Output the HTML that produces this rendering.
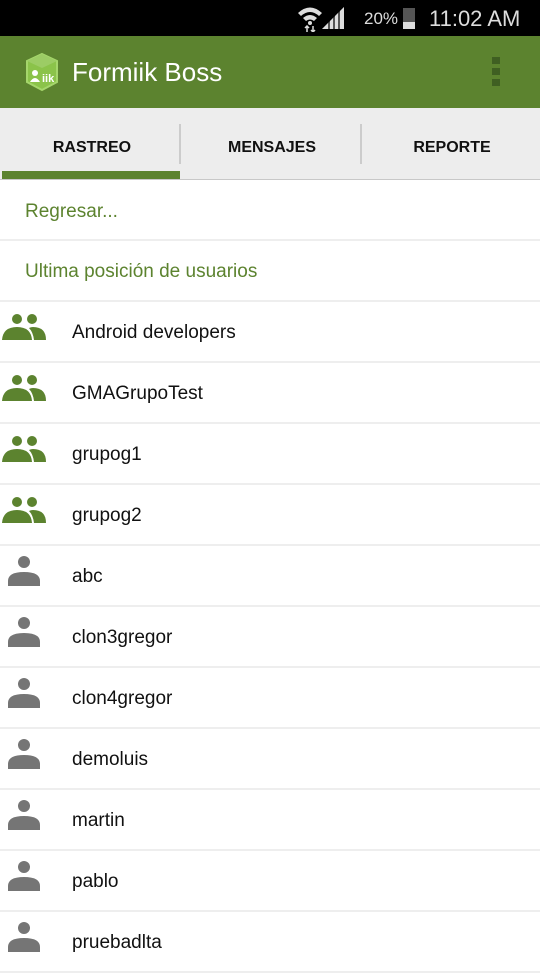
<!DOCTYPE html>
<html><head><meta charset="utf-8"><style>
*{margin:0;padding:0;box-sizing:border-box}
body{width:540px;height:960px;overflow:hidden;background:#fff;font-family:"Liberation Sans",sans-serif;position:relative}
.sb{position:absolute;top:0;left:0;width:540px;height:36px;background:#000;color:#ddd}
.ab{position:absolute;top:36px;left:0;width:540px;height:72px;background:#5c832f}
.tabs{position:absolute;top:108px;left:0;width:540px;height:72px;background:#ededed;border-bottom:1px solid #c8c8c8}
.tab{position:absolute;top:0;height:72px;line-height:80px;text-align:center;font-weight:bold;font-size:16px;color:#111;width:180px}
.sep{position:absolute;top:16px;width:2px;height:40px;background:#ccc}
.row{position:absolute;left:0;width:540px;height:61px;border-bottom:2px solid #eee}
.row span{position:absolute;left:72px;top:20px;font-size:19px;color:#111}
.g span{left:25px;color:#5c832f}
svg{position:absolute}
</style></head><body>
<div class="sb">
<svg style="left:296px;top:4px" width="30" height="28" viewBox="0 0 30 28"><path d="M2 9 Q14 -2 26 9 L23 12 Q14 4 5 12Z M7 14 Q14 8 21 14 L18 17 Q14 14 10 17Z" fill="#ddd"/><circle cx="14" cy="19" r="2" fill="#ddd"/><path d="M11 22v6M9 24l2-2 2 2M17 28v-6M15 26l2 2 2-2" stroke="#ddd" stroke-width="1.5" fill="none"/></svg>
<svg style="left:320px;top:6px" width="26" height="24" viewBox="0 0 26 24"><path d="M2 23 L24 1 V23Z" fill="#555"/><path d="M2 23 L8 17 V23Z M10 23 V15 L13 12 V23Z M15 23 V10 L18 7 V23Z M20 23 V5 L24 1 V23Z" fill="#ddd"/></svg>
<div style="position:absolute;left:364px;top:9px;font-size:17px;color:#ddd">20%</div>
<div style="position:absolute;left:403px;top:6px;width:12px;height:23px;background:#555;border-top:2px solid #000"></div>
<div style="position:absolute;left:403px;top:22px;width:12px;height:7px;background:#ddd"></div>
<div style="position:absolute;left:429px;top:6px;font-size:22px;color:#ddd">11:02 AM</div>
</div>
<div class="ab">
<svg style="left:24px;top:16px" width="36" height="40" viewBox="0 0 36 40"><path d="M18 2 L33 9 V30 L18 38 L3 30 V9Z" fill="#8bc34a" stroke="#a5d66b" stroke-width="2"/><path d="M18 2 L33 9 L18 16 L3 9Z" fill="#9ccc65"/><circle cx="11" cy="21" r="3" fill="#fff"/><path d="M6 30 Q11 22 16 30Z" fill="#fff"/><text x="18" y="30" font-size="11" fill="#fff" font-family="Liberation Sans" font-weight="bold">iik</text></svg>
<div style="position:absolute;left:72px;top:21px;font-size:26px;color:#fff">Formiik Boss</div>
<div style="position:absolute;left:492px;top:21px;width:8px;height:7px;background:#3f5f22"></div>
<div style="position:absolute;left:492px;top:32px;width:8px;height:7px;background:#3f5f22"></div>
<div style="position:absolute;left:492px;top:43px;width:8px;height:7px;background:#3f5f22"></div>
</div>
<div class="tabs">
<div class="tab" style="left:2px">RASTREO</div>
<div class="sep" style="left:179px"></div>
<div class="tab" style="left:182px">MENSAJES</div>
<div class="sep" style="left:360px"></div>
<div class="tab" style="left:362px">REPORTE</div>
<div style="position:absolute;left:2px;top:63px;width:178px;height:8px;background:#5c832f"></div>
</div>
<div class="row g" style="top:180px"><span style="top:21px">Regresar...</span></div>
<div class="row g" style="top:241px"><span>Ultima posición de usuarios</span></div>
<div id="list"></div>
<script>
var names=["Android developers","GMAGrupoTest","grupog1","grupog2","abc","clon3gregor","clon4gregor","demoluis","martin","pablo","pruebadlta"];
var h="";
names.forEach(function(n,i){var t=302+61*i;var icon=i<4?
'<svg style="left:0;top:0" width="48" height="48" viewBox="0 0 48 48"><circle cx="17" cy="17" r="5" fill="#5c832f"/><circle cx="32" cy="17" r="5" fill="#5c832f"/><path d="M2 38 Q3 25 17 25 Q31 25 32 38Z" fill="#5c832f"/><path d="M34 38 Q33 30 29 26 Q31 25 33 25 Q46 25 46 38Z" fill="#5c832f"/></svg>':
'<svg style="left:0;top:0" width="48" height="48" viewBox="0 0 48 48"><circle cx="24" cy="16" r="6" fill="#757575"/><path d="M8 40 V35 Q8 26 24 26 Q40 26 40 35 V40Z" fill="#757575"/></svg>';
h+='<div class="row" style="top:'+t+'px">'+icon+'<span>'+n+'</span></div>';});
document.getElementById("list").innerHTML=h;
</script>
</body></html>
